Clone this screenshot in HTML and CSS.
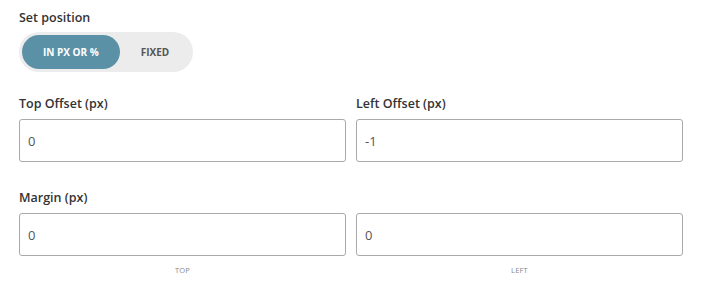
FILE: index.html
```html
<!DOCTYPE html>
<html lang="en">
<head>
    <meta charset="UTF-8">
    <meta name="viewport" content="width=device-width, initial-scale=1.0">
    <title>Set position</title>
    <link rel="stylesheet" href="styles.css">
</head>
<body>

<div class="panel">
    <div class="section">
        <div class="field-title">Set position</div>
        <div class="toggle">
            <span class="toggle-opt active">IN PX OR %</span>
            <span class="toggle-opt">FIXED</span>
        </div>
    </div>

    <div class="row offsets">
        <div class="field">
            <label class="field-title">Top Offset (px)</label>
            <input class="text-input" type="text" value="0">
        </div>
        <div class="field">
            <label class="field-title">Left Offset (px)</label>
            <input class="text-input" type="text" value="-1">
        </div>
    </div>

    <div class="section margins">
        <div class="field-title">Margin (px)</div>
        <div class="row">
            <div class="field">
                <input class="text-input" type="text" value="0">
                <div class="hint">TOP</div>
            </div>
            <div class="field">
                <input class="text-input" type="text" value="0">
                <div class="hint">LEFT</div>
            </div>
        </div>
    </div>
</div>

</body>
</html>
```

FILE: styles.css
```css
body {
    margin: 0;
    padding: 9px 21px 0 19px;
    background: #fff;
    font-family: "Open Sans", "Noto Sans", Arial, sans-serif;
    color: #333;
}

.field-title {
    display: block;
    font-size: 12.5px;
    font-weight: 600;
    line-height: 18px;
    color: #333;
}

.toggle {
    display: inline-flex;
    align-items: center;
    margin-top: 5px;
    padding: 3px;
    background-color: #ececec;
    border-radius: 20px;
}

.toggle-opt {
    padding: 0 21px;
    height: 34px;
    line-height: 34px;
    border-radius: 17px;
    font-size: 10px;
    font-weight: 700;
    color: #555;
}

.toggle-opt.active {
    background-color: #5b91a6;
    color: #fff;
}

.row {
    display: flex;
    gap: 10px;
}

.field {
    flex: 1;
    display: flex;
    flex-direction: column;
}

.offsets {
    margin-top: 23px;
}

.offsets .field-title {
    margin-bottom: 6px;
}

.margins {
    margin-top: 27px;
}

.margins .field-title {
    margin-bottom: 6px;
}

.text-input {
    box-sizing: border-box;
    width: 100%;
    height: 43px;
    padding: 0 8px;
    border: 1px solid #a9a9a9;
    border-radius: 3px;
    font-family: inherit;
    font-size: 13px;
    color: #555;
    background: #fff;
}

.hint {
    margin-top: 9px;
    text-align: center;
    font-size: 7.5px;
    letter-spacing: 0.2px;
    color: #888;
}
```
